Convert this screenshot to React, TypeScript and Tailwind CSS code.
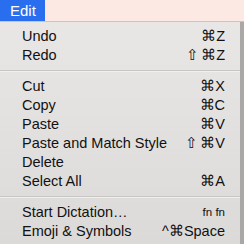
import React from 'react';

type Item = { label: string; keys?: string; shift?: boolean; small?: boolean } | 'sep';

const items: Item[] = [
  { label: 'Undo', keys: '⌘Z' },
  { label: 'Redo', keys: '⌘Z', shift: true },
  'sep',
  { label: 'Cut', keys: '⌘X' },
  { label: 'Copy', keys: '⌘C' },
  { label: 'Paste', keys: '⌘V' },
  { label: 'Paste and Match Style', keys: '⌘V', shift: true },
  { label: 'Delete' },
  { label: 'Select All', keys: '⌘A' },
  'sep',
  { label: 'Start Dictation…', keys: 'fn fn', small: true },
  { label: 'Emoji & Symbols', keys: '^⌘Space' },
];

export default function App() {
  return (
    <div
      className="w-[244px] h-[244px] overflow-hidden bg-[#d9d7d6] text-[#111] flex flex-col"
      style={{ fontFamily: '"Liberation Sans", Arial, sans-serif' }}
    >
      <div className="h-[22px] flex bg-[#fde9e4] border-b border-[#c9c5c3]">
        <div className="w-[45px] bg-[#2a6ef0] text-white text-[15px] leading-[22px] pl-[10px]">Edit</div>
      </div>
      <div className="flex flex-1">
        <div className="w-[240px] bg-gradient-to-b from-[#e9e7e6] to-[#dcdad9] pt-[5px]">
          {items.map((it, i) =>
            it === 'sep' ? (
              <div key={i} className="my-[5px] h-[2px] border-t border-[#c8c6c5] border-b border-b-[#f2f0ef]" />
            ) : (
              <div key={i} className="flex items-center h-[19px] pl-[22px] pr-[15px] text-[14.5px]">
                <span className="flex-1 whitespace-nowrap">{it.label}</span>
                {it.keys && (
                  <span className={it.small ? 'text-[11.5px]' : 'whitespace-nowrap'}>
                    {it.shift && <span className="mr-[2px]">⇧</span>}
                    {it.keys}
                  </span>
                )}
              </div>
            )
          )}
        </div>
        <div className="flex-1 bg-[#a9a8a7]" />
      </div>
    </div>
  );
}
